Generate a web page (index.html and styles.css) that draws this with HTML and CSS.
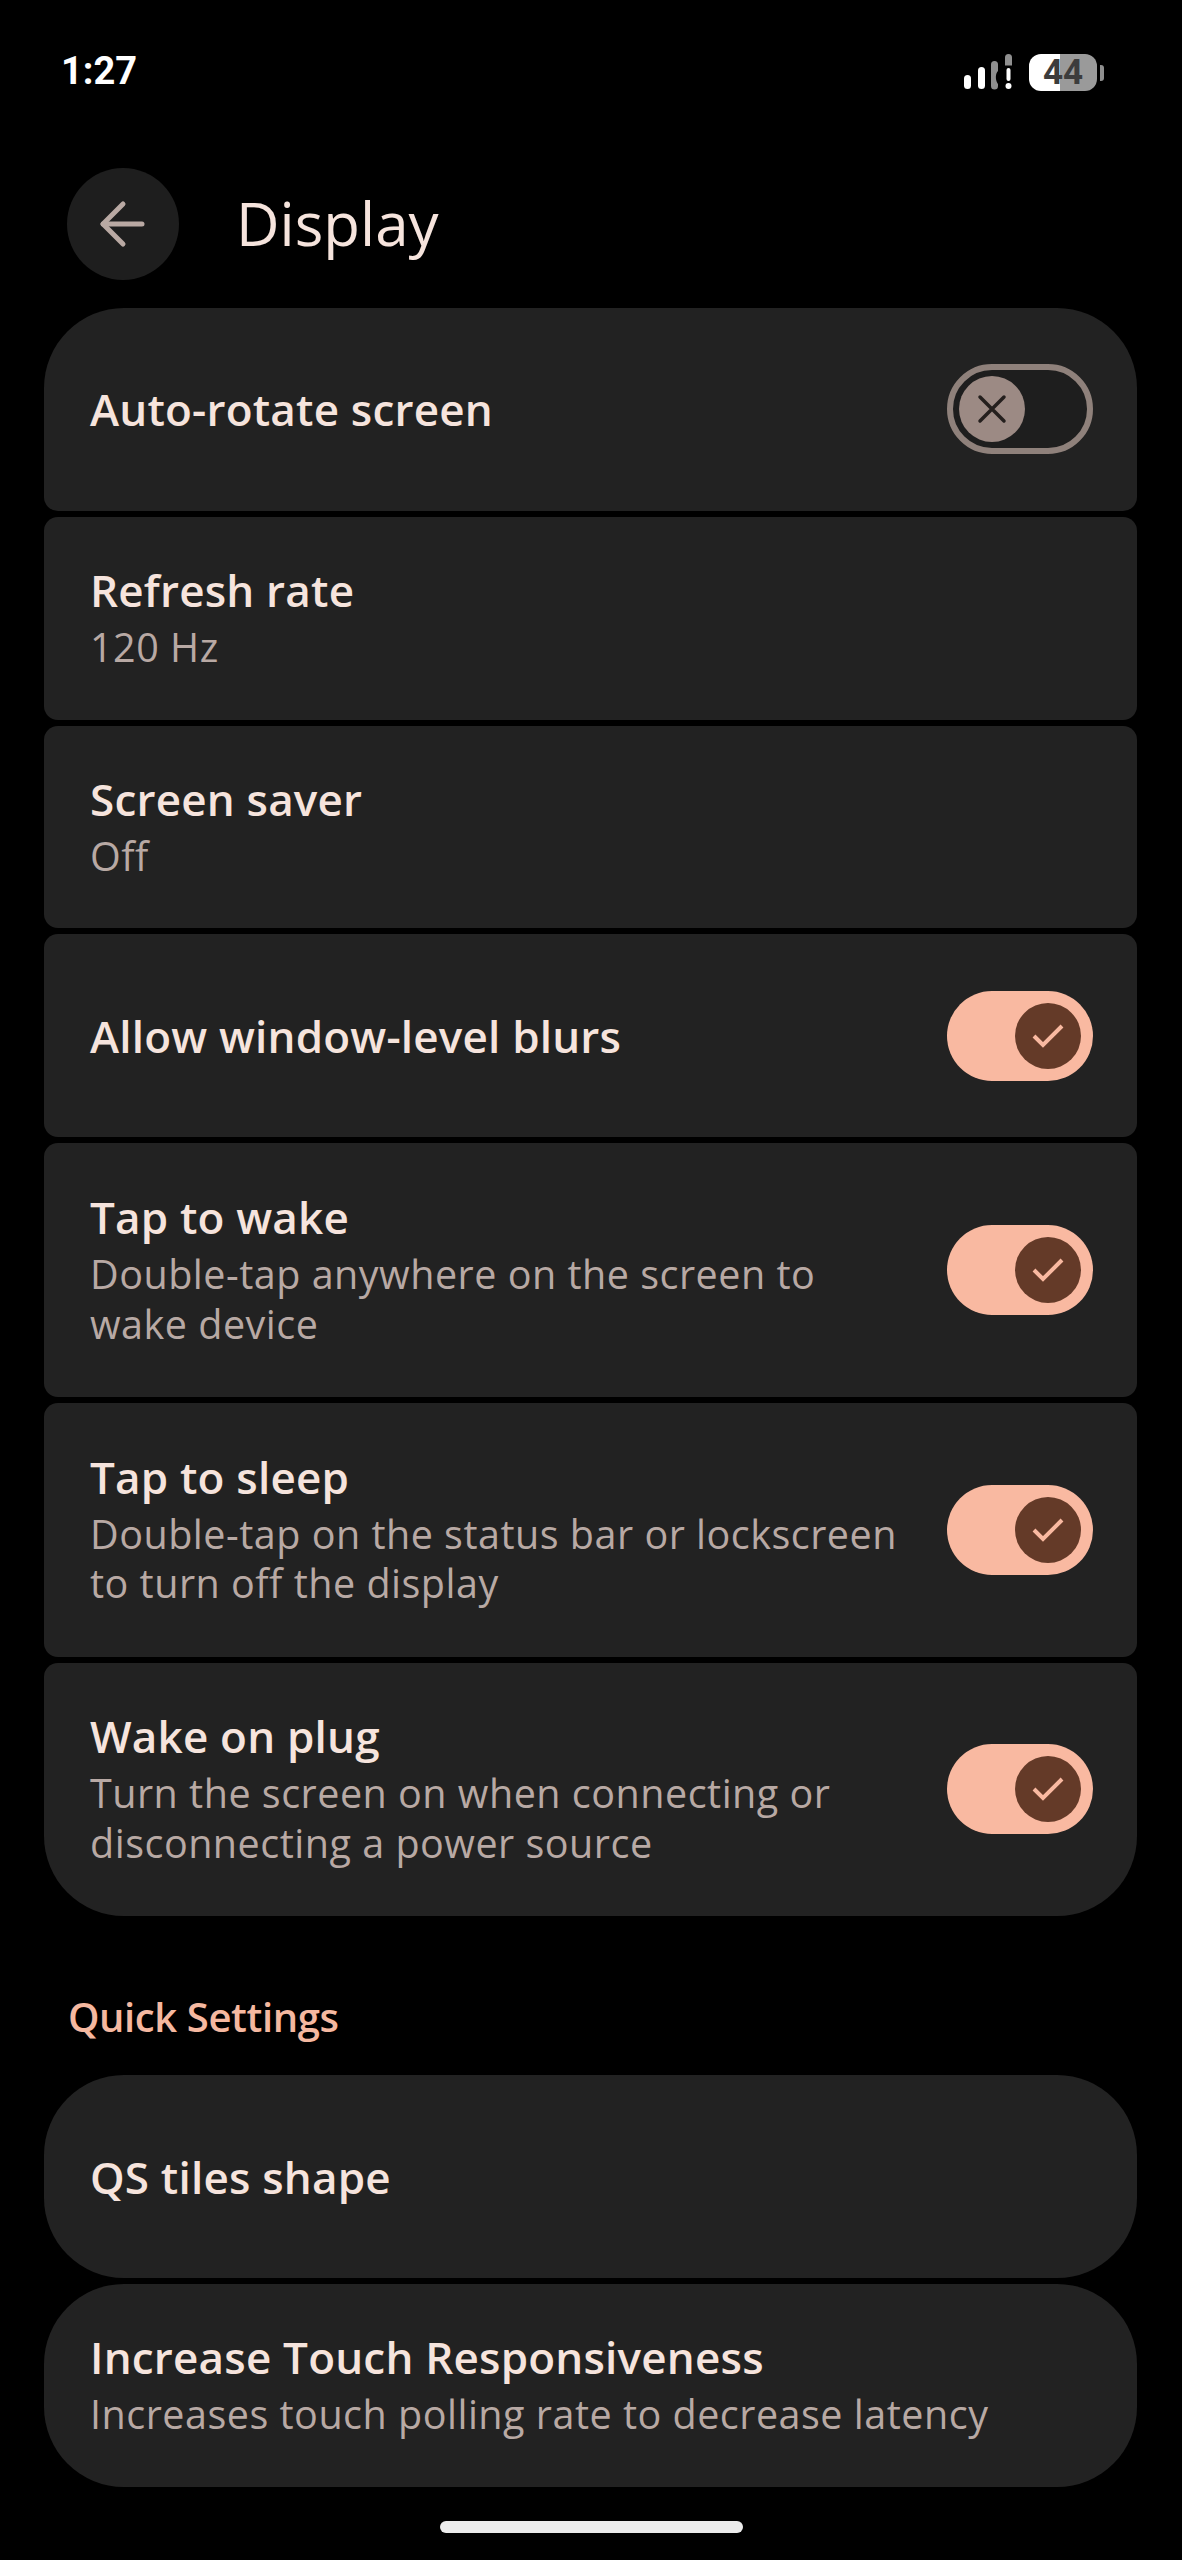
FILE: index.html
```html
<!DOCTYPE html>
<html lang="en">

<head>
    <meta charset="UTF-8">
    <meta name="viewport" content="width=device-width, initial-scale=1.0">
    <title>Display</title>
    <link rel="stylesheet" href="styles.css">
</head>

<body>
    <!-- Status bar -->
    <div class="status-bar">
        <span class="time">1:27</span>
        <div class="status-icons">
            <svg class="signal" width="50" height="38" viewBox="0 0 50 38">
                <rect x="1" y="22" width="7" height="14" rx="3.5" fill="#fff"/>
                <rect x="15" y="14" width="7" height="22" rx="3.5" fill="#fff"/>
                <path d="M28 11.5a3.5 3.5 0 0 1 7 0v6.5c-2.4 2.4-3 8-.4 12.500l.4 .5v2a3.500 3.500 0 0 1-7 0z" fill="#8f8f8f"/>
                <path d="M42 4.500a3.500 3.500 0 0 1 7 0v8h-7z" fill="#8f8f8f"/>
                <rect x="43.500" y="15" width="4" height="13" rx="2" fill="#fff"/>
                <circle cx="45.500" cy="33" r="3" fill="#fff"/>
            </svg>
            <div class="battery">
                <div class="battery-body">
                    <span class="battery-text">44</span>
                </div>
                <div class="battery-nub"></div>
            </div>
        </div>
    </div>

    <!-- Toolbar -->
    <div class="toolbar">
        <div class="back-button">
            <svg width="48" height="48" viewBox="0 0 48 48" fill="none" stroke="#b9a9a3" stroke-width="5" stroke-linecap="round" stroke-linejoin="round">
                <path d="M43 24H4"/>
                <path d="M24 4 4 24l20 20"/>
            </svg>
        </div>
        <h1 class="page-title">Display</h1>
    </div>

    <!-- Main list -->
    <div class="group">
        <div class="row">
            <div class="row-text">
                <div class="row-title">Auto-rotate screen</div>
            </div>
            <div class="switch off">
                <div class="thumb">
                    <svg width="30" height="30" viewBox="0 0 30 30" stroke="#241f1d" stroke-width="3.500" stroke-linecap="round">
                        <path d="M3 3 27 27M27 3 3 27"/>
                    </svg>
                </div>
            </div>
        </div>
        <div class="row">
            <div class="row-text">
                <div class="row-title">Refresh rate</div>
                <div class="row-sub">120 Hz</div>
            </div>
        </div>
        <div class="row">
            <div class="row-text">
                <div class="row-title">Screen saver</div>
                <div class="row-sub">Off</div>
            </div>
        </div>
        <div class="row">
            <div class="row-text">
                <div class="row-title">Allow window-level blurs</div>
            </div>
            <div class="switch on">
                <div class="thumb">
                    <svg width="32" height="26" viewBox="0 0 32 26" fill="none" stroke="#f9b9a1" stroke-width="4">
                        <path d="M2 13 11 22 30 3"/>
                    </svg>
                </div>
            </div>
        </div>
        <div class="row tall">
            <div class="row-text">
                <div class="row-title">Tap to wake</div>
                <div class="row-sub">Double-tap anywhere on the screen to<br>wake device</div>
            </div>
            <div class="switch on">
                <div class="thumb">
                    <svg width="32" height="26" viewBox="0 0 32 26" fill="none" stroke="#f9b9a1" stroke-width="4">
                        <path d="M2 13 11 22 30 3"/>
                    </svg>
                </div>
            </div>
        </div>
        <div class="row tall">
            <div class="row-text">
                <div class="row-title">Tap to sleep</div>
                <div class="row-sub">Double-tap on the status bar or lockscreen<br>to turn off the display</div>
            </div>
            <div class="switch on">
                <div class="thumb">
                    <svg width="32" height="26" viewBox="0 0 32 26" fill="none" stroke="#f9b9a1" stroke-width="4">
                        <path d="M2 13 11 22 30 3"/>
                    </svg>
                </div>
            </div>
        </div>
        <div class="row tall">
            <div class="row-text">
                <div class="row-title">Wake on plug</div>
                <div class="row-sub">Turn the screen on when connecting or<br>disconnecting a power source</div>
            </div>
            <div class="switch on">
                <div class="thumb">
                    <svg width="32" height="26" viewBox="0 0 32 26" fill="none" stroke="#f9b9a1" stroke-width="4">
                        <path d="M2 13 11 22 30 3"/>
                    </svg>
                </div>
            </div>
        </div>
    </div>

    <!-- Quick Settings -->
    <div class="section-label">Quick Settings</div>
    <div class="group">
        <div class="row single">
            <div class="row-text">
                <div class="row-title">QS tiles shape</div>
            </div>
        </div>
        <div class="row single">
            <div class="row-text">
                <div class="row-title">Increase Touch Responsiveness</div>
                <div class="row-sub">Increases touch polling rate to decrease latency</div>
            </div>
        </div>
    </div>

    <div class="home-bar"></div>
</body>
</html>
```

FILE: styles.css
```css
body {
    margin: 0;
    height: 2560px;
    overflow: hidden;
    background: #000;
    font-family: "Open Sans", sans-serif;
    display: flex;
    flex-direction: column;
}

/* Status bar */
.status-bar {
    height: 92px;
    box-sizing: border-box;
    padding: 47px 78px 0 61px;
    display: flex;
    justify-content: space-between;
    align-items: flex-start;
}

.time {
    color: #fff;
    font-family: Roboto, sans-serif;
    font-size: 38px;
    font-weight: 700;
    line-height: 48px;
}

.status-icons {
    display: flex;
    align-items: flex-end;
    gap: 16px;
    margin-top: 6px;
}

.battery {
    display: flex;
    align-items: center;
    gap: 3px;
}

.battery-body {
    width: 68px;
    height: 37px;
    border-radius: 12px;
    background: linear-gradient(90deg, #fff 46%, #9a9a9a 46%);
    display: flex;
    justify-content: center;
    align-items: center;
}

.battery-text {
    color: #3c3c3c;
    font-family: Roboto, sans-serif;
    font-size: 35px;
    font-weight: 700;
}

.battery-nub {
    width: 4px;
    height: 16px;
    border-radius: 0 3px 3px 0;
    background: #8f8f8f;
}

/* Toolbar */
.toolbar {
    height: 216px;
    box-sizing: border-box;
    padding: 76px 0 0 67px;
    display: flex;
    align-items: flex-start;
    gap: 57px;
}

.back-button {
    width: 112px;
    height: 112px;
    border-radius: 50%;
    background: #1e1e1e;
    display: flex;
    justify-content: center;
    align-items: center;
}

.page-title {
    margin: -1px 0 0;
    color: #f6e4dd;
    font-size: 60px;
    font-weight: 400;
    line-height: 112px;
}

/* List groups */
.group {
    margin: 0 45px 0 44px;
    display: flex;
    flex-direction: column;
    gap: 6px;
}

.row {
    height: 202.8px;
    box-sizing: border-box;
    padding: 0 44px 0 46px;
    background: #222;
    border-radius: 14px;
    display: flex;
    justify-content: space-between;
    align-items: center;
}

.row.tall {
    height: 253.7px;
}

.group .row:first-child {
    border-radius: 80px 80px 14px 14px;
}

.group .row:last-child {
    border-radius: 14px 14px 80px 80px;
}

.group .row.single {
    border-radius: 80px;
}

.row-title {
    color: #f6e4dd;
    font-size: 44px;
    font-weight: 600;
    line-height: 56px;
    letter-spacing: 0.2px;
}

.row-sub {
    color: #b8a9a4;
    font-size: 39.500px;
    line-height: 49.500px;
    letter-spacing: 0.5px;
    margin-top: 5px;
    padding-bottom: 2px;
}

/* Switches */
.switch {
    width: 146px;
    height: 90px;
    box-sizing: border-box;
    border-radius: 45px;
    display: flex;
    align-items: center;
}

.switch.off {
    background: #1e1e1e;
    border: 6px solid #8f817b;
    padding-left: 6px;
}

.switch.on {
    background: #f9b9a1;
    justify-content: flex-end;
    padding-right: 12px;
}

.thumb {
    width: 66px;
    height: 66px;
    border-radius: 50%;
    display: flex;
    justify-content: center;
    align-items: center;
}

.off .thumb {
    background: #9c8a84;
}

.on .thumb {
    background: #643a28;
}

.section-label {
    margin: 77px 0 34px 68px;
    color: #f5b8a0;
    font-size: 40px;
    font-weight: 600;
    line-height: 48px;
    letter-spacing: -0.4px;
}

.home-bar {
    width: 303px;
    height: 12px;
    margin: 34px auto 0;
    border-radius: 6px;
    background: #ececec;
}
```
